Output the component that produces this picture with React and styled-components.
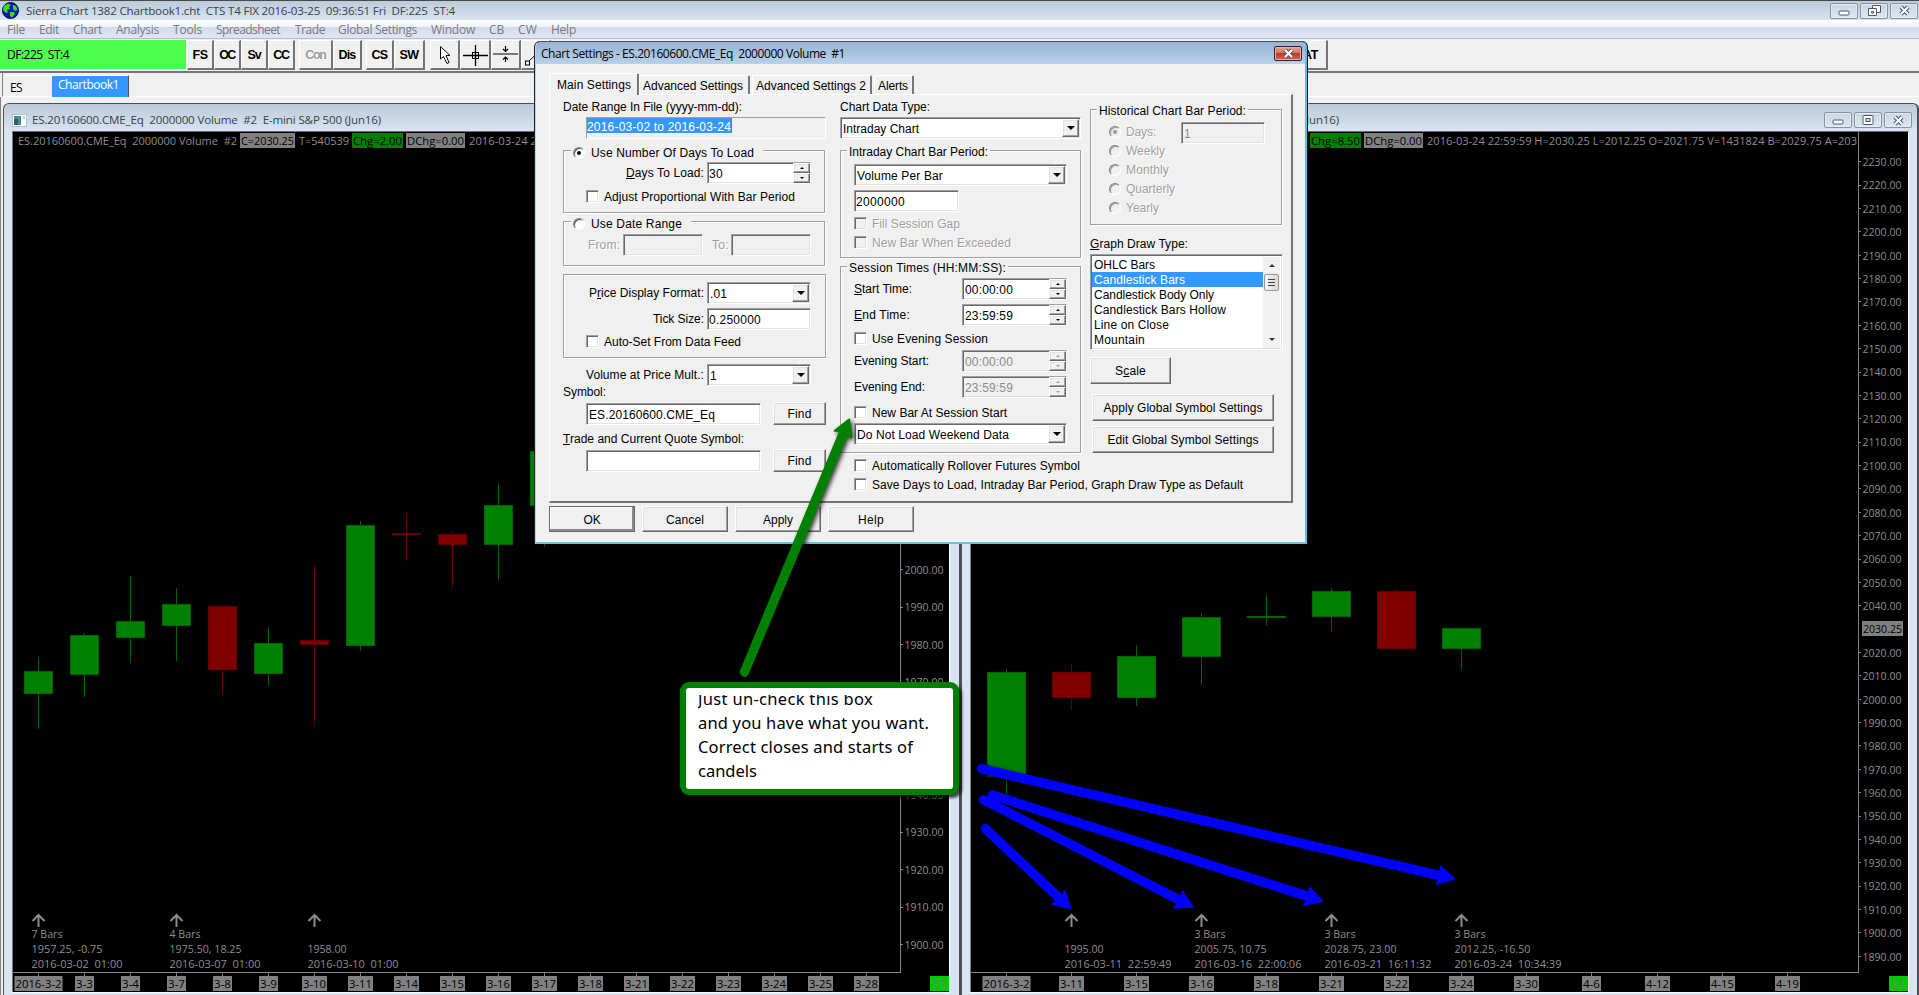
import React, { useLayoutEffect, useRef } from "react";
import styled, { createGlobalStyle, css } from "styled-components";

const Global = createGlobalStyle`
  * { box-sizing: border-box; }
  body { margin: 0; background: #f0f0f0; overflow: hidden; }
`;
const UI = `"Open Sans", "Noto Sans", sans-serif`;
const SANS = `"Liberation Sans", Arial, sans-serif`;

/* ---------- text fitted to a given advance width ---------- */
const FitSpan = styled.span`
  display: inline-block;
  flex: none;
  white-space: pre;
`;
function Fit({ w, children, className }) {
  const ref = useRef(null);
  useLayoutEffect(() => {
    const el = ref.current;
    el.style.letterSpacing = "0px";
    const natural = el.getBoundingClientRect().width;
    el.style.letterSpacing = `${(w - natural) / el.textContent.length}px`;
  }, [w, children]);
  return <FitSpan ref={ref} className={className}>{children}</FitSpan>;
}

/* ---------- application frame ---------- */
const Frame = styled.div`
  position: relative;
  width: 1919px;
  height: 995px;
  display: flex;
  flex-direction: column;
  overflow: hidden;
  background: #f0f0f0;
  font: 12px/16px ${UI};
  color: #000;
`;
const TitleBar = styled.header`
  height: 20px;
  flex: none;
  display: flex;
  align-items: center;
  padding: 0 1px 0 2px;
  border-top: 1px solid #4a4a4a;
  background: linear-gradient(#bccbda, #d8e4f0);
  color: #3c4248;
`;
const Caption = styled.div`
  flex: 1;
  padding-left: ${(p) => p.$pl ?? 7}px;
  font-size: 11.6px;
  overflow: hidden;
  white-space: nowrap;
`;
const CaptionButtons = styled.div`
  display: flex;
  gap: 2px;
  margin-right: ${(p) => p.$mr || 0}px;
`;
const CaptionButton = styled.div`
  width: 28px;
  height: 16px;
  border: 1px solid #8592a3;
  border-radius: 2px;
  background: linear-gradient(#cbd6e2, #dbe6f0);
  box-shadow: inset 0 0 0 1px #e3ebf3;
  display: grid;
  place-items: center;
`;
const MenuBar = styled.nav`
  height: 19px;
  flex: none;
  display: flex;
  padding: 2px 0 0 7px;
  border-bottom: 1px solid #b8bacb;
  background: linear-gradient(#fff 0, #f0f2f9 38%, #d5daee 40%, #e1e6f6 100%);
  color: #7a7a7c;
`;
const MenuItem = styled.div`
  width: ${(p) => p.$w}px;
`;
const Toolbar = styled.div`
  height: 34px;
  flex: none;
  display: flex;
  align-items: flex-start;
  padding-top: 1px;
  border-bottom: 2px solid #747474;
`;
const Status = styled.div`
  width: 187px;
  height: 29px;
  padding: 7px 0 0 7px;
  background: #4dfc4d;
  border-right: 1px solid #fff;
`;
const ToolButton = styled.div`
  width: ${(p) => p.$w}px;
  height: 30px;
  margin-left: ${(p) => p.$ml || 0}px;
  display: flex;
  align-items: center;
  justify-content: center;
  font: bold 12.5px/16px ${SANS};
  border-right: 2px solid #747474;
  border-bottom: 2px solid #747474;
  border-left: 1px solid #fff;
  border-top: 1px solid #fff;
  overflow: hidden;
  color: ${(p) => (p.$off ? "#9b9b9b" : "#000")};
  text-shadow: ${(p) => (p.$off ? "1px 1px 0 #fff" : "none")};
`;
const TabStrip = styled.div`
  height: 24px;
  flex: none;
  margin-left: 2px;
  padding: 2px 0 0 2px;
  display: flex;
  border-bottom: 1px solid #fff;
  border-left: 1px solid #808080;
`;
const BookTab = styled.div`
  width: ${(p) => p.$w}px;
  height: ${(p) => (p.$on ? 22 : 20)}px;
  padding: ${(p) => (p.$on ? "1px 0 0 6px" : "4px 0 0 5px")};
  border-top: 1px solid #fff;
  color: ${(p) => (p.$on ? "#fff" : "#000")};
  background: ${(p) => (p.$on ? "#3399ff" : "#f0f0f0")};
  border-right: ${(p) => (p.$on ? "1px solid #555" : "none")};
`;
const Workspace = styled.main`
  flex: 1;
  display: flex;
  padding: 6px 0 0 2px;
  border-left: 1px solid #808080;
`;
const ChartWindow = styled.section`
  width: ${(p) => p.$w}px;
  height: 892px;
  display: flex;
  flex-direction: column;
  padding: 0 9px 0 8px;
  border: 1px solid #4f4f4f;
  border-width: 1px 2px 0 1px;
  border-radius: 6px 6px 0 0;
  background: linear-gradient(#bccbda, #d8e4f1 28px);
`;
const ChartTitle = styled.div`
  height: 27px;
  flex: none;
  display: flex;
  align-items: center;
  color: #3c4248;
  padding-top: 5px;
`;
const ChartSurface = styled.div`
  height: 861px;
  width: ${(p) => p.$w}px;
  background: #000;
  border-top: 1px solid #6a6a6a;
  border-right: 1px solid #fff;
  border-left: 1px solid #7a7a7a;
  box-shadow: 0 1px 0 #fff;
  svg { display: block; }
`;

/* ---------- classic controls ---------- */
const sunken = css`
  border: 1px solid;
  border-color: #a0a0a0 #fff #fff #a0a0a0;
  box-shadow: inset 1px 1px 0 #696969, inset -1px -1px 0 #e3e3e3;
`;
const raised = css`
  border: 1px solid;
  border-color: #fff #696969 #696969 #fff;
  box-shadow: inset -1px -1px 0 #a0a0a0, inset 1px 1px 0 #e3e3e3;
`;
const grayed = css`
  color: #a0a0a0;
  text-shadow: 1px 1px 0 #fff;
`;
const Dialog = styled.div`
  position: absolute;
  left: 535px;
  top: 41px;
  width: 772px;
  height: 503px;
  border: 1px solid #b9d1ea;
  border-right: 2px solid #4fc3e4;
  border-bottom: 2px solid #5cc8e6;
  border-top-color: #4a5058;
  border-radius: 6px 6px 0 0;
  background: #f0f0f0;
  font: 12px/14px ${SANS};
  box-shadow: -1px 0 0 #222, 1px 0 0 #111;
  overflow: hidden;
`;
const DialogTitle = styled.div`
  height: 22px;
  display: flex;
  align-items: center;
  justify-content: space-between;
  padding: 1px 3px 0 5px;
  background: linear-gradient(#98b4d2, #b9d1ea);
  font: 12px/16px ${UI};
`;
const RedClose = styled.div`
  width: 28px;
  height: 15px;
  margin-bottom: 1px;
  border: 1px solid #43192b;
  border-radius: 2px;
  background: linear-gradient(#e3a79b, #cf7463 45%, #b73f2b 50%, #d0674f);
  box-shadow: inset 0 0 0 1px #e4b0a5;
  display: grid;
  place-items: center;
`;
const Tabs = styled.div`
  height: 30px;
  padding-left: 13px;
  display: flex;
  align-items: flex-end;
`;
const Tab = styled.div`
  width: ${(p) => p.$w}px;
  height: ${(p) => (p.$on ? 22 : 19)}px;
  margin-right: ${(p) => (p.$on ? 0 : 2)}px;
  margin-bottom: ${(p) => (p.$on ? -1 : 0)}px;
  padding: ${(p) => (p.$on ? "4px 0 0 7px" : "3px 0 0 3px")};
  position: relative;
  z-index: ${(p) => (p.$on ? 1 : 0)};
  background: #f0f0f0;
  border: solid #fff;
  border-width: 1px 0 0 1px;
  border-right: 2px solid #777;
  border-radius: 2px 2px 0 0;
`;
const Page = styled.div`
  width: 744px;
  height: 409px;
  margin-left: 13px;
  display: flex;
  padding-left: 13px;
  border: 1px solid #fff;
  border-right: 2px solid #747474;
  border-bottom: 2px solid #747474;
`;
const Column = styled.div`
  width: ${(p) => p.$w}px;
  margin-right: ${(p) => p.$gap || 0}px;
  flex: none;
`;
const Row = styled.div`
  height: ${(p) => p.$h || 22}px;
  margin-top: ${(p) => p.$mt || 0}px;
  padding-left: ${(p) => p.$pl || 0}px;
  display: flex;
  align-items: center;
  gap: ${(p) => p.$gap || 0}px;
  white-space: nowrap;
  ${(p) => p.$off && grayed}
`;
const Group = styled.div`
  width: ${(p) => (p.$w ? p.$w + "px" : "auto")};
  height: ${(p) => p.$h}px;
  margin-top: ${(p) => p.$mt}px;
  border: 1px solid #a0a0a0;
  box-shadow: 1px 1px 0 #fff, inset 1px 1px 0 #fff;
`;
const Legend = styled.div`
  height: 14px;
  width: ${(p) => (p.$w ? p.$w + "px" : "fit-content")};
  margin: ${(p) => p.$mt || -6}px 0 0 ${(p) => (p.$w ? 7 : 6)}px;
  padding: 0 2px;
  background: #f0f0f0;
  display: flex;
  align-items: center;
`;
const RightLabel = styled.div`
  width: ${(p) => p.$w || 140}px;
  display: flex;
  justify-content: flex-end;
`;
const LeftLabel = styled.div`
  width: 108px;
`;
const Field = styled.div`
  width: ${(p) => p.$w}px;
  height: 22px;
  display: flex;
  align-items: center;
  padding: 2px 2px 0 ${(p) => p.$pl ?? 2}px;
  background: ${(p) => (p.$off ? "#f0f0f0" : "#fff")};
  color: ${(p) => (p.$off ? "#8b8b8b" : "#000")};
  text-shadow: none;
  ${sunken}
`;
const FieldText = styled.div`
  flex: 1;
`;
const DropArrow = styled.div`
  width: 17px;
  height: 18px;
  margin: -1px -1px 1px 0;
  background: #f0f0f0;
  display: grid;
  place-items: center;
  ${raised}
`;
const SpinBox = styled.div`
  width: 17px;
  height: 20px;
  margin: -1px -2px 1px 0;
  display: flex;
  flex-direction: column;
`;
const SpinHalf = styled.div`
  height: 10px;
  background: #f0f0f0;
  display: grid;
  place-items: center;
  ${raised}
`;
const Readonly = styled.div`
  width: 240px;
  height: 22px;
  margin: 3px 0 0 23px;
  border: 1px solid;
  border-color: #a0a0a0 #fff #fff #a0a0a0;
`;
const Selected = styled.div`
  width: 145px;
  height: 15px;
  line-height: 18px;
  background: #3399ff;
  color: #fff;
  border-right: 1px solid #c26a10;
`;
const Box = styled.div`
  width: 13px;
  height: 13px;
  margin-right: 5px;
  flex: none;
  background: ${(p) => (p.$off ? "#f0f0f0" : "#fff")};
  ${sunken}
`;
const RadioDot = styled.div`
  width: 12px;
  height: 12px;
  margin-right: ${(p) => (p.$off ? 5 : 6)}px;
  border-radius: 50%;
  flex: none;
  display: grid;
  place-items: center;
  background: ${(p) => (p.$off ? "#f0f0f0" : "#fff")};
  border: 1px solid;
  border-color: #808080 #fff #fff #808080;
  box-shadow: inset 1px 1px 0 ${(p) => (p.$off ? "#a0a0a0" : "#555")};
  &::after {
    content: "";
    width: 4px;
    height: 4px;
    border-radius: 50%;
    background: ${(p) => (p.$on ? (p.$off ? "#999" : "#000") : "transparent")};
  }
`;
const Push = styled.div`
  width: ${(p) => p.$w}px;
  height: ${(p) => p.$h || 27}px;
  margin: ${(p) => p.$mt || 0}px 0 0 ${(p) => p.$ml || 0}px;
  padding-top: 1px;
  display: grid;
  place-items: center;
  background: #f0f0f0;
  ${raised}
  ${(p) => p.$def && css`outline: 1px solid #696969; outline-offset: -1px; border-color: #696969; box-shadow: inset -2px -2px 0 #8a8a8a, inset 1px 1px 0 #fff;`}
`;
const List = styled.div`
  width: 193px;
  height: 96px;
  margin-top: 3px;
  padding: 2px 2px 2px 1px;
  display: flex;
  background: #fff;
  ${sunken}
`;
const ListItems = styled.div`
  width: 173px;
`;
const ListItem = styled.div`
  height: 15px;
  padding-left: 2px;
  line-height: 16px;
  background: ${(p) => (p.$on ? "#3399ff" : "transparent")};
  color: ${(p) => (p.$on ? "#fff" : "#000")};
`;
const ScrollBar = styled.div`
  width: 17px;
  height: 91px;
  display: flex;
  flex-direction: column;
  align-items: center;
  background: #f0f0f0;
`;
const Thumb = styled.div`
  width: 15px;
  height: 17px;
  margin-bottom: auto;
  border: 1px solid #979797;
  border-radius: 2px;
  background: linear-gradient(90deg, #f5f5f5, #d8d8d8);
  display: grid;
  place-items: center;
`;
const ArrowCell = styled.div`
  height: 17px;
  display: grid;
  place-items: center;
`;
const Footer = styled.div`
  display: flex;
  gap: 7px;
  padding: 3px 0 0 13px;
`;

const Tri = ({ up, s = 4, c = "#000" }) => (
  <svg width={s * 2} height={s} viewBox="0 0 8 4">
    <path d={up ? "M0 4L4 0L8 4Z" : "M0 0L4 4L8 0Z"} fill={c} />
  </svg>
);
const Spin = ({ off }) => (
  <SpinBox>
    <SpinHalf><Tri up s={2} c={off ? "#a0a0a0" : "#000"} /></SpinHalf>
    <SpinHalf><Tri s={2} c={off ? "#a0a0a0" : "#000"} /></SpinHalf>
  </SpinBox>
);
const Select = ({ w, tw, children }) => (
  <Field $w={w}>
    <FieldText><Fit w={tw}>{children}</Fit></FieldText>
    <DropArrow><Tri /></DropArrow>
  </Field>
);
const Spinner = ({ w, tw, off, pl, children }) => (
  <Field $w={w} $off={off} $pl={pl}>
    <FieldText><Fit w={tw}>{children}</Fit></FieldText>
    <Spin off={off} />
  </Field>
);
const Check = ({ mt, pl, w, off, children }) => (
  <Row $h={13} $mt={mt} $pl={pl} $off={off}>
    <Box $off={off} />
    <Fit w={w}>{children}</Fit>
  </Row>
);

/* ---------- caption glyphs ---------- */
const MinGlyph = () => (
  <svg width="12" height="10"><rect x="1" y="5" width="10" height="4" rx="1" fill="#fff" stroke="#535666" /></svg>
);
const MaxGlyph = () => (
  <svg width="12" height="10"><rect x="1" y=".5" width="10" height="9" rx="1" fill="#fff" stroke="#535666" /><rect x="4" y="3.5" width="4" height="3" fill="#d4dfea" stroke="#535666" /></svg>
);
const RestoreGlyph = () => (
  <svg width="13" height="12"><path d="M4.5 .5h8v7h-8z" fill="#fff" stroke="#535666" /><path d="M.5 3.5h8v7h-8z" fill="#fff" stroke="#535666" /><path d="M3.5 6.5h2v1.500h-2z" fill="#d4dfea" stroke="#535666" /></svg>
);
const CloseGlyph = () => (
  <svg width="13" height="11" viewBox="0 0 13 11">
    <path d="M3 2L10 9M10 2L3 9" stroke="#535666" strokeWidth="4.200" />
    <path d="M3 2L10 9M10 2L3 9" stroke="#fff" strokeWidth="2" />
  </svg>
);
const Globe = () => (
  <svg width="17" height="17" viewBox="0 0 17 17">
    <circle cx="8.500" cy="8.500" r="8" fill="#0a14c8" stroke="#061040" />
    <path d="M2 4L6 1.500L9 3L7 5L8 7L5 8L6 10L4 11L1 8Z" fill="#38e018" />
    <path d="M11 3L14 4L15.500 8L13 9L11 7ZM8 10L12 10L13 12L10 15.500L8 14Z" fill="#38e018" />
  </svg>
);
const ChartIcon = () => (
  <svg width="15" height="13"><rect x=".5" y=".5" width="14" height="12" fill="#fff" stroke="#b4c4d4" /><rect x="2" y="2" width="7" height="9" fill="#4a8f88" /><rect x="2" y="5" width="4" height="6" fill="#2c6070" /><path d="M12 2v3" stroke="#7890a8" /></svg>
);

/* ---------- charts ---------- */
const SvgText = ({ x, y, w, fill = "#8e8e8e", children }) => (
  <text x={x} y={y} textLength={w} lengthAdjust="spacingAndGlyphs" fill={fill} xmlSpace="preserve" style={{ whiteSpace: "pre" }}>{children}</text>
);
const Tag = ({ x, y, w, h = 15, bg = "#808080", fg = "#000", tw, children }) => (
  <g>
    <rect x={x} y={y} width={w} height={h} fill={bg} />
    <SvgText x={x + (w - tw) / 2} y={y + 12} w={tw} fill={fg}>{children}</SvgText>
  </g>
);
const Candle = ({ x, hw, d: [up, hi, lo, top, bot] }) => {
  const line = up ? "#006400" : "#640000";
  return (
    <g shapeRendering="crispEdges">
      <rect x={x} y={hi} width="1" height={lo - hi} fill={line} />
      <rect x={x - hw} y={top} width={hw * 2 + 1} height={bot - top} fill={line} />
      {bot - top > 2 && <rect x={x - hw + 1} y={top + 1} width={hw * 2 - 1} height={bot - top - 2} fill={up ? "#008000" : "#800000"} />}
    </g>
  );
};
const Note = ({ x, lines }) => (
  <g>
    <path d={`M${x + 0.5} 927V915M${x - 5.5} 921L${x + 0.5} 915L${x + 6.5} 921`} stroke="#8c8c8c" strokeWidth="2" fill="none" />
    {lines.map(([t, w], i) => t && <SvgText key={i} x={x - 6.5} y={938 + i * 15} w={w}>{t}</SvgText>)}
  </g>
);
const dateW = (t) => (t.length > 5 ? 48 : t.length === 3 ? 19 : 25);

function Chart({ x0, w, axis, hw, step, first, candles, dates, notes, prices, header, count, last }) {
  return (
    <svg width={w} height="860" viewBox={`${x0} 132 ${w} 860`} fontFamily='"Open Sans", "Noto Sans", sans-serif' fontSize="11.500">
      {header}
      <g shapeRendering="crispEdges" fill="#808080">
        <rect x={axis} y="132" width="1" height="841" />
        <rect x={x0} y="972" width={axis - x0 + 1} height="1" />
        {dates.map((d, i) => <rect key={i} x={Math.round(first + i * step)} y="972" width="1" height="4" />)}
        {prices.map(([p, y]) => <rect key={p} x={axis} y={Math.floor(y)} width="3" height="1" />)}
      </g>
      {candles.map((c, i) => <Candle key={i} x={Math.round(first + i * step)} hw={hw} d={c} />)}
      {prices.map(([p, y]) => <SvgText key={p} x={axis + 4.5} y={y + 4.300} w={39}>{p.toFixed(2)}</SvgText>)}
      {last && <Tag x={axis + 4} y={621} w={41} tw={39}>{last}</Tag>}
      {notes.map((n, i) => <Note key={i} {...n} />)}
      {dates.map((d, i) => <Tag key={i} x={Math.round(first + i * step) + 0.5 - dateW(d) / 2} y={976} w={dateW(d)} tw={dateW(d) - 2}>{d}</Tag>)}
      <Tag x={x0 + w - 19} y={976} w={19} tw={12} bg="#00c800" fg="#808080">{count}</Tag>
    </svg>
  );
}

const leftCandles = [
  [1, 658, 729, 671, 694], [1, 633, 697, 635, 675], [1, 576, 663, 621, 638], [1, 588, 661, 604, 626],
  [0, 604, 695, 606, 670], [1, 627, 686, 643, 674], [0, 565, 726, 640, 645], [1, 521, 651, 525, 646],
  [0, 513, 561, 533, 535], [0, 531, 588, 534, 545], [1, 484, 580, 505, 545], [1, 440, 547, 451, 506],
];
const rightCandles = [
  [1, 669, 795, 672, 777], [0, 664, 710, 672, 698], [1, 645, 706, 656, 698], [1, 613, 685, 617, 657],
  [1, 595, 626, 616, 618], [1, 588, 631, 591, 617], [0, 588, 649, 591, 649], [1, 628, 670, 628, 649],
];
const leftDates = "2016-3-2 3-3 3-4 3-7 3-8 3-9 3-10 3-11 3-14 3-15 3-16 3-17 3-18 3-21 3-22 3-23 3-24 3-25 3-28".split(" ");
const rightDates = "2016-3-2 3-11 3-15 3-16 3-18 3-21 3-22 3-24 3-30 4-6 4-12 4-15 4-19".split(" ");
/* prices that the dialog leaves in view on the left scale */
const leftPrices = Array.from({ length: 11 }, (_, i) => [1900 + i * 10, 944.5 - i * 37.5]);
const rightPrices = Array.from({ length: 35 }, (_, i) => [1890 + i * 10, 956.3 - i * 23.37]).filter(([p]) => p !== 2030);

/* ---------- annotation arrows ---------- */
function Pointer({ from, to, color }) {
  const [x1, y1] = from, [x2, y2] = to;
  const len = Math.hypot(x2 - x1, y2 - y1);
  const ang = (Math.atan2(y2 - y1, x2 - x1) * 180) / Math.PI;
  return (
    <g transform={`translate(${x1} ${y1}) rotate(${ang})`} fill={color} stroke={color}>
      <path d={`M0 0H${len - 12}`} strokeWidth="9.500" strokeLinecap="round" />
      <path d={`M${len - 1} 0L${len - 17} -9L${len - 14} 0L${len - 17} 9Z`} strokeWidth="2" strokeLinejoin="round" />
    </g>
  );
}
const Annotations = styled.svg`
  position: absolute;
  left: 0;
  top: 0;
  filter: drop-shadow(2px 2px 2px rgba(0, 0, 0, 0.75));
`;
const Callout = styled.div`
  position: absolute;
  left: 680px;
  top: 682px;
  width: 279px;
  height: 113px;
  padding: 7px 0 0 12px;
  border: 6px solid #008000;
  border-radius: 9px;
  background: #fff;
  box-shadow: 3px 3px 3px rgba(0, 0, 0, 0.7);
  font: 16.5px/23.9px "Noto Sans", "Open Sans", sans-serif;
`;
const CalloutText = styled.div`
  height: 94px;
  overflow: hidden;
  display: flex;
  flex-direction: column;
  align-items: flex-start;
`;
const FirstLine = styled.div`
  margin-top: -8px;
`;

const menu = [
  ["File", 32, 18], ["Edit", 34, 20], ["Chart", 43, 29], ["Analysis", 57, 43], ["Tools", 43, 29], ["Spreadsheet", 79, 64],
  ["Trade", 43, 30], ["Global Settings", 93, 79], ["Window", 58, 44], ["CB", 29, 15], ["CW", 33, 19], ["Help", 30, 25],
];
const tools = [
  ["FS", 27, 15], ["OC", 27, 15.5], ["Sv", 27, 13], ["CC", 27, 15.5], ["Con", 34, 20.5, 4, true], ["Dis", 29, 17], ["CS", 28, 16, 4], ["SW", 31, 19],
];

function SettingsDialog() {
  return (
    <Dialog>
      <DialogTitle>
        <Fit w={304}>{"Chart Settings - ES.20160600.CME_Eq  2000000 Volume  #1"}</Fit>
        <RedClose><CloseGlyph /></RedClose>
      </DialogTitle>
      <Tabs>
        <Tab $w={90} $on><Fit w={74}>Main Settings</Fit></Tab>
        <Tab $w={111}><Fit w={100}>Advanced Settings</Fit></Tab>
        <Tab $w={120}><Fit w={110}>Advanced Settings 2</Fit></Tab>
        <Tab $w={40}><Fit w={30}>Alerts</Fit></Tab>
      </Tabs>
      <Page>
        <Column $w={263} $gap={14}>
          <Row $h={14} $mt={5}><Fit w={179}>Date Range In File (yyyy-mm-dd):</Fit></Row>
          <Readonly><Selected><Fit w={144}>2016-03-02 to 2016-03-24</Fit></Selected></Readonly>
          <Group $w={262} $h={63} $mt={11}>
            <Legend $w={192} $mt={-5}><RadioDot $on /><Fit w={163}>Use Number Of Days To Load</Fit></Legend>
            <Row $mt={2} $gap={3}>
              <RightLabel><Fit w={78}><u>D</u>ays To Load:</Fit></RightLabel>
              <Spinner w={104} tw={14} pl={1}>30</Spinner>
            </Row>
            <Check mt={6} pl={22} w={191}>Adjust Proportional With Bar Period</Check>
          </Group>
          <Group $w={262} $h={45} $mt={8}>
            <Legend $w={120} $mt={-5}><RadioDot /><Fit w={91}>Use Date Range</Fit></Legend>
            <Row $mt={3} $pl={24} $gap={3} $off>
              <Fit w={32}>From:</Fit><Field $w={80} $off />
              <Row $pl={6} $gap={2}><Fit w={17}>To:</Fit><Field $w={80} $off /></Row>
            </Row>
          </Group>
          <Group $h={84} $mt={8}>
            <Row $mt={7} $gap={3}>
              <RightLabel><Fit w={115}>P<u>r</u>ice Display Format:</Fit></RightLabel>
              <Select w={104} tw={17}>.01</Select>
            </Row>
            <Row $mt={4} $gap={3}>
              <RightLabel><Fit w={51}>Tick Size:</Fit></RightLabel>
              <Field $w={104} $pl={1}><Fit w={52}>0.250000</Fit></Field>
            </Row>
            <Check mt={5} pl={22} w={137}>Auto-Set From Data Feed</Check>
          </Group>
          <Row $mt={6} $gap={3}>
            <RightLabel $w={141}><Fit w={118}>Volume at Price Mult.:</Fit></RightLabel>
            <Select w={104} tw={6}>1</Select>
          </Row>
          <Row $h={14} $mt={-1}><Fit w={43}>Symbol:</Fit></Row>
          <Row $h={23} $mt={3} $pl={23} $gap={12}>
            <Field $w={175}><Fit w={126}>ES.20160600.CME_Eq</Fit></Field>
            <Push $w={53} $h={23}><Fit w={24}>Find</Fit></Push>
          </Row>
          <Row $h={14} $mt={7}><Fit w={181}><u>T</u>rade and Current Quote Symbol:</Fit></Row>
          <Row $h={23} $mt={3} $pl={23} $gap={12}>
            <Field $w={175} />
            <Push $w={53} $h={23}><Fit w={24}>Find</Fit></Push>
          </Row>
        </Column>
        <Column $w={241} $gap={9}>
          <Row $h={14} $mt={5}><Fit w={90}>Chart Data Type:</Fit></Row>
          <Row $mt={3}><Select w={241} tw={76}>Intraday Chart</Select></Row>
          <Group $h={108} $mt={11}>
            <Legend><Fit w={139}>Intraday Chart Bar Period:</Fit></Legend>
            <Row $mt={5} $pl={13}><Select w={213} tw={86}>Volume Per Bar</Select></Row>
            <Row $mt={4} $pl={13}><Field $w={105} $pl={1}><Fit w={49}>2000000</Fit></Field></Row>
            <Check mt={5} pl={13} w={88} off>Fill Session Gap</Check>
            <Check mt={6} pl={13} w={139} off>New Bar When Exceeded</Check>
          </Group>
          <Group $h={187} $mt={8}>
            <Legend><Fit w={157}>Session Times (HH:MM:SS):</Fit></Legend>
            <Row $mt={3} $pl={13}><LeftLabel><Fit w={58}><u>S</u>tart Time:</Fit></LeftLabel><Spinner w={105} tw={48}>00:00:00</Spinner></Row>
            <Row $mt={4} $pl={13}><LeftLabel><Fit w={56}><u>E</u>nd Time:</Fit></LeftLabel><Spinner w={105} tw={48}>23:59:59</Spinner></Row>
            <Check mt={6} pl={13} w={116}>Use Evening Session</Check>
            <Row $mt={5} $pl={13}><LeftLabel><Fit w={75}>Evening Start:</Fit></LeftLabel><Spinner w={105} tw={48} off>00:00:00</Spinner></Row>
            <Row $mt={4} $pl={13}><LeftLabel><Fit w={71}>Evening End:</Fit></LeftLabel><Spinner w={105} tw={48} off>23:59:59</Spinner></Row>
            <Check mt={8} pl={13} w={135}>New Bar At Session Start</Check>
            <Row $mt={4} $pl={13}><Select w={213} tw={152}>Do Not Load Weekend Data</Select></Row>
          </Group>
          <Check mt={6} pl={14} w={208}>Automatically Rollover Futures Symbol</Check>
          <Check mt={6} pl={14} w={371}>Save Days to Load, Intraday Bar Period, Graph Draw Type as Default</Check>
        </Column>
        <Column $w={193}>
          <Group $w={192} $h={116} $mt={14}>
            <Legend><Fit w={147}>Historical Chart Bar Period:</Fit></Legend>
            <Row $h={96} $mt={4} $pl={18}>
              <Column $w={72}>
                {[["Days:", 30], ["Weekly", 39], ["Monthly", 43], ["Quarterly", 49], ["Yearly", 33]].map(([t, w], i) => (
                  <Row key={t} $h={19} $off><RadioDot $off $on={i === 0} /><Fit w={w}>{t}</Fit></Row>
                ))}
              </Column>
              <Column $w={84}><Field $w={84} $off><Fit w={6}>1</Fit></Field><Row $h={74} /></Column>
            </Row>
          </Group>
          <Row $h={14} $mt={12}><Fit w={98}><u>G</u>raph Draw Type:</Fit></Row>
          <List>
            <ListItems>
              {[["OHLC Bars", 61], ["Candlestick Bars", 91], ["Candlestick Body Only", 120], ["Candlestick Bars Hollow", 132], ["Line on Close", 75], ["Mountain", 51]].map(([t, w], i) => (
                <ListItem key={t} $on={i === 1}><Fit w={w}>{t}</Fit></ListItem>
              ))}
            </ListItems>
            <ScrollBar>
              <ArrowCell><Tri up s={3} c="#333" /></ArrowCell>
              <Thumb><svg width="7" height="8"><path d="M0 .5H7M0 3.500H7M0 6.500H7" stroke="#444" /></svg></Thumb>
              <ArrowCell><Tri s={3} c="#333" /></ArrowCell>
            </ScrollBar>
          </List>
          <Push $w={81} $mt={7}><Fit w={31}>S<u>c</u>ale</Fit></Push>
          <Push $w={182} $mt={10} $ml={2}><Fit w={159}>Apply Global Symbol Settings</Fit></Push>
          <Push $w={182} $mt={5} $ml={2}><Fit w={151}>Edit Global Symbol Settings</Fit></Push>
        </Column>
      </Page>
      <Footer>
        <Push $w={86} $h={26} $def><Fit w={17}>OK</Fit></Push>
        <Push $w={86} $h={26}><Fit w={38}>Cancel</Fit></Push>
        <Push $w={86} $h={26}><Fit w={30}>Apply</Fit></Push>
        <Push $w={86} $h={26}><Fit w={26}>Help</Fit></Push>
      </Footer>
    </Dialog>
  );
}

export default function App() {
  return (
    <Frame>
      <Global />
      <TitleBar>
        <Globe />
        <Caption><Fit w={429}>{"Sierra Chart 1382 Chartbook1.cht  CTS T4 FIX 2016-03-25  09:36:51 Fri  DF:225  ST:4"}</Fit></Caption>
        <CaptionButtons>
          <CaptionButton><MinGlyph /></CaptionButton>
          <CaptionButton><RestoreGlyph /></CaptionButton>
          <CaptionButton><CloseGlyph /></CaptionButton>
        </CaptionButtons>
      </TitleBar>
      <MenuBar>
        {menu.map(([t, w, tw]) => <MenuItem key={t} $w={w}><Fit w={tw}>{t}</Fit></MenuItem>)}
      </MenuBar>
      <Toolbar>
        <Status><Fit w={62}>{"DF:225  ST:4"}</Fit></Status>
        {tools.map(([t, w, tw, ml, off]) => <ToolButton key={t} $w={w} $ml={ml} $off={off}><Fit w={tw}>{t}</Fit></ToolButton>)}
        <ToolButton $w={30} $ml={5}>
          <svg width="14" height="20"><path d="M2.500 1.500V14L5.500 11.500L9 18.500L11 17.500L8 10.500H12Z" fill="#fff" stroke="#000" /></svg>
        </ToolButton>
        <ToolButton $w={31}>
          <svg width="25" height="22"><path d="M0 11.500H25M12.500 1V22" stroke="#000" strokeWidth="1.300" /><rect x="9.500" y="8.500" width="6" height="6" fill="none" stroke="#000" /></svg>
        </ToolButton>
        <ToolButton $w={30}>
          <svg width="25" height="20"><path d="M0 9H25M12.500 1V6M10 4L12.500 6.500L15 4M12.500 17V12M10 14.500L12.500 12L15 14.500" fill="none" stroke="#000" strokeWidth="1.200" /></svg>
        </ToolButton>
        <ToolButton $w={30}>
          <svg width="24" height="22"><rect x="1.500" y="17" width="4" height="4" fill="none" stroke="#000" /><path d="M5 17L20 3" stroke="#000" /></svg>
        </ToolButton>
        <ToolButton $w={34} $ml={743}><Fit w={15}>AT</Fit></ToolButton>
      </Toolbar>
      <TabStrip>
        <BookTab $w={47}><Fit w={12}>ES</Fit></BookTab>
        <BookTab $w={77} $on><Fit w={61}>Chartbook1</Fit></BookTab>
      </TabStrip>
      <Workspace>
        <ChartWindow $w={958}>
          <ChartTitle>
            <ChartIcon />
            <Caption $pl={5}><Fit w={349}>{"ES.20160600.CME_Eq  2000000 Volume  #2  E-mini S&P 500 (Jun16)"}</Fit></Caption>
          </ChartTitle>
          <ChartSurface $w={938}>
            <Chart
              x0={13} w={936} axis={900} hw={14} step={46} first={38} candles={leftCandles} dates={leftDates} prices={leftPrices} count="45"
              notes={[
                { x: 38, lines: [["7 Bars", 31], ["1957.25, -0.75", 71], ["2016-03-02  01:00", 91]] },
                { x: 176, lines: [["4 Bars", 31], ["1975.50, 18.25", 72], ["2016-03-07  01:00", 91]] },
                { x: 314, lines: [["", 0], ["1958.00", 39], ["2016-03-10  01:00", 91]] },
              ]}
              header={
                <g>
                  <SvgText x={18} y={145} w={219}>{"ES.20160600.CME_Eq  2000000 Volume  #2"}</SvgText>
                  <Tag x={240} y={133} w={55} tw={53}>C=2030.25</Tag>
                  <SvgText x={299} y={145} w={50}>T=540539</SvgText>
                  <Tag x={352} y={133} w={51} tw={49} bg="#008000">Chg=2.00</Tag>
                  <Tag x={406} y={133} w={59} tw={57}>DChg=0.00</Tag>
                  <SvgText x={469} y={145} w={106}>2016-03-24 22:59:59</SvgText>
                </g>
              }
            />
          </ChartSurface>
        </ChartWindow>
        <ChartWindow $w={958}>
          <ChartTitle>
            <ChartIcon />
            <Caption $pl={5}><Fit w={349}>{"ES.20160600.CME_Eq  2000000 Volume  #1  E-mini S&P 500 (Jun16)"}</Fit></Caption>
            <CaptionButtons $mr={-4}>
              <CaptionButton><MinGlyph /></CaptionButton>
              <CaptionButton><MaxGlyph /></CaptionButton>
              <CaptionButton><CloseGlyph /></CaptionButton>
            </CaptionButtons>
          </ChartTitle>
          <ChartSurface $w={939}>
            <Chart
              x0={971} w={937} axis={1858} hw={19} step={65.05} first={1006} candles={rightCandles} dates={rightDates} prices={rightPrices} count="64" last="2030.25"
              notes={[
                { x: 1071, lines: [["", 0], ["1995.00", 39], ["2016-03-11  22:59:49", 107]] },
                { x: 1201, lines: [["3 Bars", 31], ["2005.75, 10.75", 72], ["2016-03-16  22:00:06", 107]] },
                { x: 1331, lines: [["3 Bars", 31], ["2028.75, 23.00", 72], ["2016-03-21  16:11:32", 107]] },
                { x: 1461, lines: [["3 Bars", 31], ["2012.25, -16.50", 76], ["2016-03-24  10:34:39", 107]] },
              ]}
              header={
                <g>
                  <Tag x={1310} y={133} w={51} tw={49} bg="#008000">Chg=8.50</Tag>
                  <Tag x={1364} y={133} w={59} tw={57}>DChg=0.00</Tag>
                  <SvgText x={1427} y={145} w={430}>2016-03-24 22:59:59 H=2030.25 L=2012.25 O=2021.75 V=1431824 B=2029.75 A=203</SvgText>
                </g>
              }
            />
          </ChartSurface>
        </ChartWindow>
      </Workspace>
      <SettingsDialog />
      <Callout>
        <CalloutText>
          <FirstLine><Fit w={175}>Just un-check this box</Fit></FirstLine>
          <Fit w={231}>and you have what you want.</Fit>
          <Fit w={215}>Correct closes and starts of</Fit>
          <Fit w={59}>candels</Fit>
        </CalloutText>
      </Callout>
      <Annotations width="1919" height="995">
        <Pointer from={[744.5, 672]} to={[849.5, 418.5]} color="#008000" />
        <Pointer from={[985.5, 828.7]} to={[1071, 909]} color="#0000ff" />
        <Pointer from={[983.5, 799.7]} to={[1193.5, 907.3]} color="#0000ff" />
        <Pointer from={[992.5, 795]} to={[1323, 901.3]} color="#0000ff" />
        <Pointer from={[981.5, 768.7]} to={[1455, 879]} color="#0000ff" />
      </Annotations>
    </Frame>
  );
}
